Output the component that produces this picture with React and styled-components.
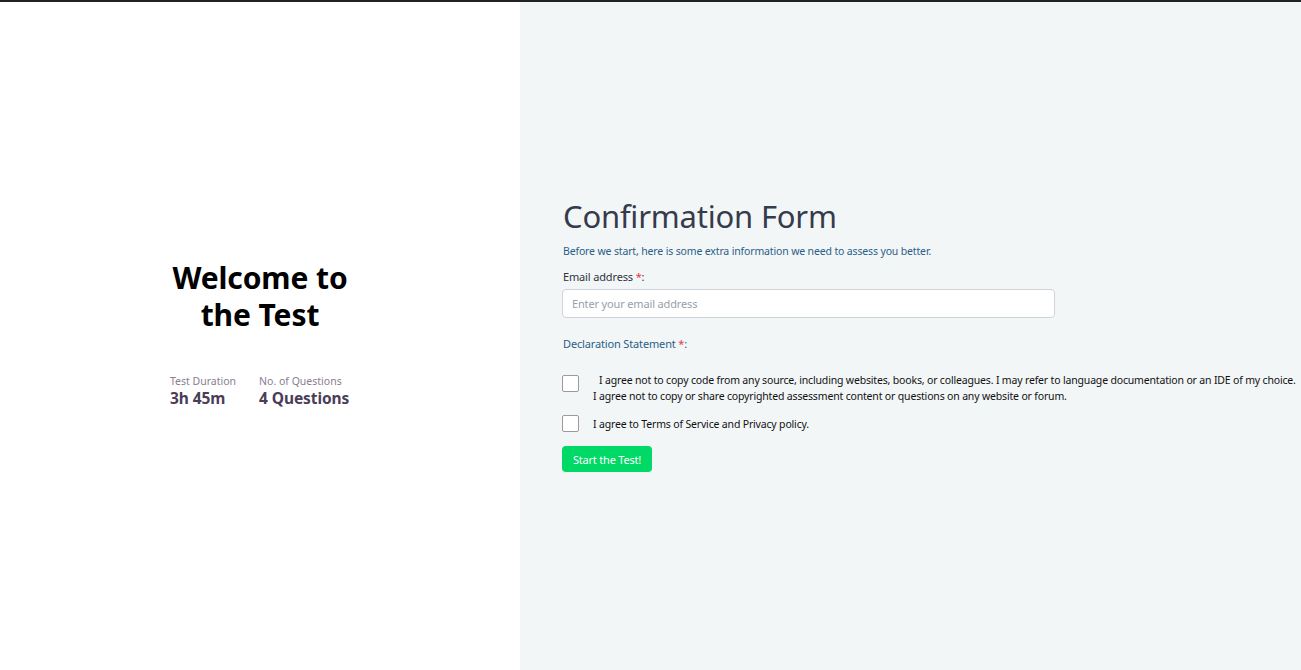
import React from 'react'
import styled, { createGlobalStyle } from 'styled-components'

const Global = createGlobalStyle`
  * { box-sizing: border-box; }
  html, body { margin: 0; padding: 0; }
  body {
    font-family: "Noto Sans", "Open Sans", sans-serif;
    background: #fff;
  }
`

const Page = styled.div`
  height: 670px;
  border-top: 2px solid #222;
  display: grid;
  grid-template-columns: 520px 1fr;
`

const Intro = styled.section`
  background: #fff;
  display: flex;
  flex-direction: column;
  padding: 257px 0 0 168px;
`

const Welcome = styled.h1`
  margin: 0;
  width: 184px;
  text-align: center;
  font-size: 30px;
  line-height: 37px;
  font-weight: 700;
  color: #000;
  letter-spacing: -0.1px;
`

const Stats = styled.div`
  display: flex;
  gap: 23px;
  margin-top: 41px;
  padding-left: 2px;
`

const Stat = styled.div`
  display: flex;
  flex-direction: column;
  span {
    font-size: 10.5px;
    line-height: 14px;
    color: #8b7d91;
  }
  strong {
    font-size: 15.5px;
    line-height: 20px;
    color: #4b3d58;
    font-weight: 700;
    letter-spacing: -0.1px;
  }
`

const FormPanel = styled.section`
  background: #f2f6f7;
  padding: 195px 0 0 43px;
`

const Title = styled.h2`
  margin: 0;
  font-size: 31px;
  line-height: 38px;
  font-weight: 400;
  color: #363b4c;
  letter-spacing: -0.2px;
`

const Lead = styled.p`
  margin: 8px 0 0;
  font-size: 10.5px;
  line-height: 16px;
  color: #2c5e87;
  letter-spacing: -0.15px;
`

const Label = styled.label`
  display: block;
  font-size: 11px;
  line-height: 16px;
  letter-spacing: -0.15px;
  color: ${p => (p.blue ? '#2c5e87' : '#2f3440')};
  margin: ${p => p.space || '10px 0 4px'};
  em {
    font-style: normal;
    color: #e53946;
  }
`

const Input = styled.input`
  display: block;
  width: 493px;
  height: 29px;
  margin-left: -1px;
  border: 1px solid #cfd3da;
  border-radius: 4px;
  background: #fff;
  padding: 0 9px;
  font-family: inherit;
  font-size: 11px;
  letter-spacing: -0.15px;
  color: #333;
  &::placeholder { color: #9aa0a8; }
  outline: none;
`

const Checks = styled.div`
  display: flex;
  flex-direction: column;
  gap: 11px;
  margin-top: 20px;
`

const CheckRow = styled.label`
  display: flex;
  align-items: ${p => (p.top ? 'flex-start' : 'center')};
  gap: 14px;
  margin-left: -1px;
`

const Box = styled.span`
  flex: none;
  width: 17px;
  height: 17px;
  margin-top: ${p => (p.top ? '3px' : '0')};
  background: #fff;
  border: 1px solid #9a9a9a;
  border-radius: 2px;
`

const CheckText = styled.span`
  font-size: 10.5px;
  line-height: 16px;
  color: #111;
  letter-spacing: -0.17px;
  white-space: nowrap;
  .indent { padding-left: 6px; }
`

const StartButton = styled.button`
  margin: 14px 0 0 -1px;
  width: 90px;
  height: 26px;
  border: none;
  border-radius: 4px;
  background: #00d966;
  color: #fff;
  font-family: inherit;
  font-size: 11px;
  cursor: pointer;
  letter-spacing: -0.2px;
`

export default function App() {
  return (
    <>
      <Global />
      <Page>
        <Intro>
          <Welcome>Welcome to the Test</Welcome>
          <Stats>
            <Stat>
              <span>Test Duration</span>
              <strong>3h 45m</strong>
            </Stat>
            <Stat>
              <span>No. of Questions</span>
              <strong>4 Questions</strong>
            </Stat>
          </Stats>
        </Intro>
        <FormPanel>
          <Title>Confirmation Form</Title>
          <Lead>Before we start, here is some extra information we need to assess you better.</Lead>
          <Label>Email address <em>*</em>:</Label>
          <Input type="email" placeholder="Enter your email address" />
          <Label blue space="18px 0 0">Declaration Statement <em>*</em>:</Label>
          <Checks>
            <CheckRow top>
              <Box top />
              <CheckText>
                <span className="indent">I agree not to copy code from any source, including websites, books, or colleagues. I may refer to language documentation or an IDE of my choice.</span>
                <br />
                I agree not to copy or share copyrighted assessment content or questions on any website or forum.
              </CheckText>
            </CheckRow>
            <CheckRow>
              <Box />
              <CheckText>I agree to Terms of Service and Privacy policy.</CheckText>
            </CheckRow>
          </Checks>
          <StartButton>Start the Test!</StartButton>
        </FormPanel>
      </Page>
    </>
  )
}
